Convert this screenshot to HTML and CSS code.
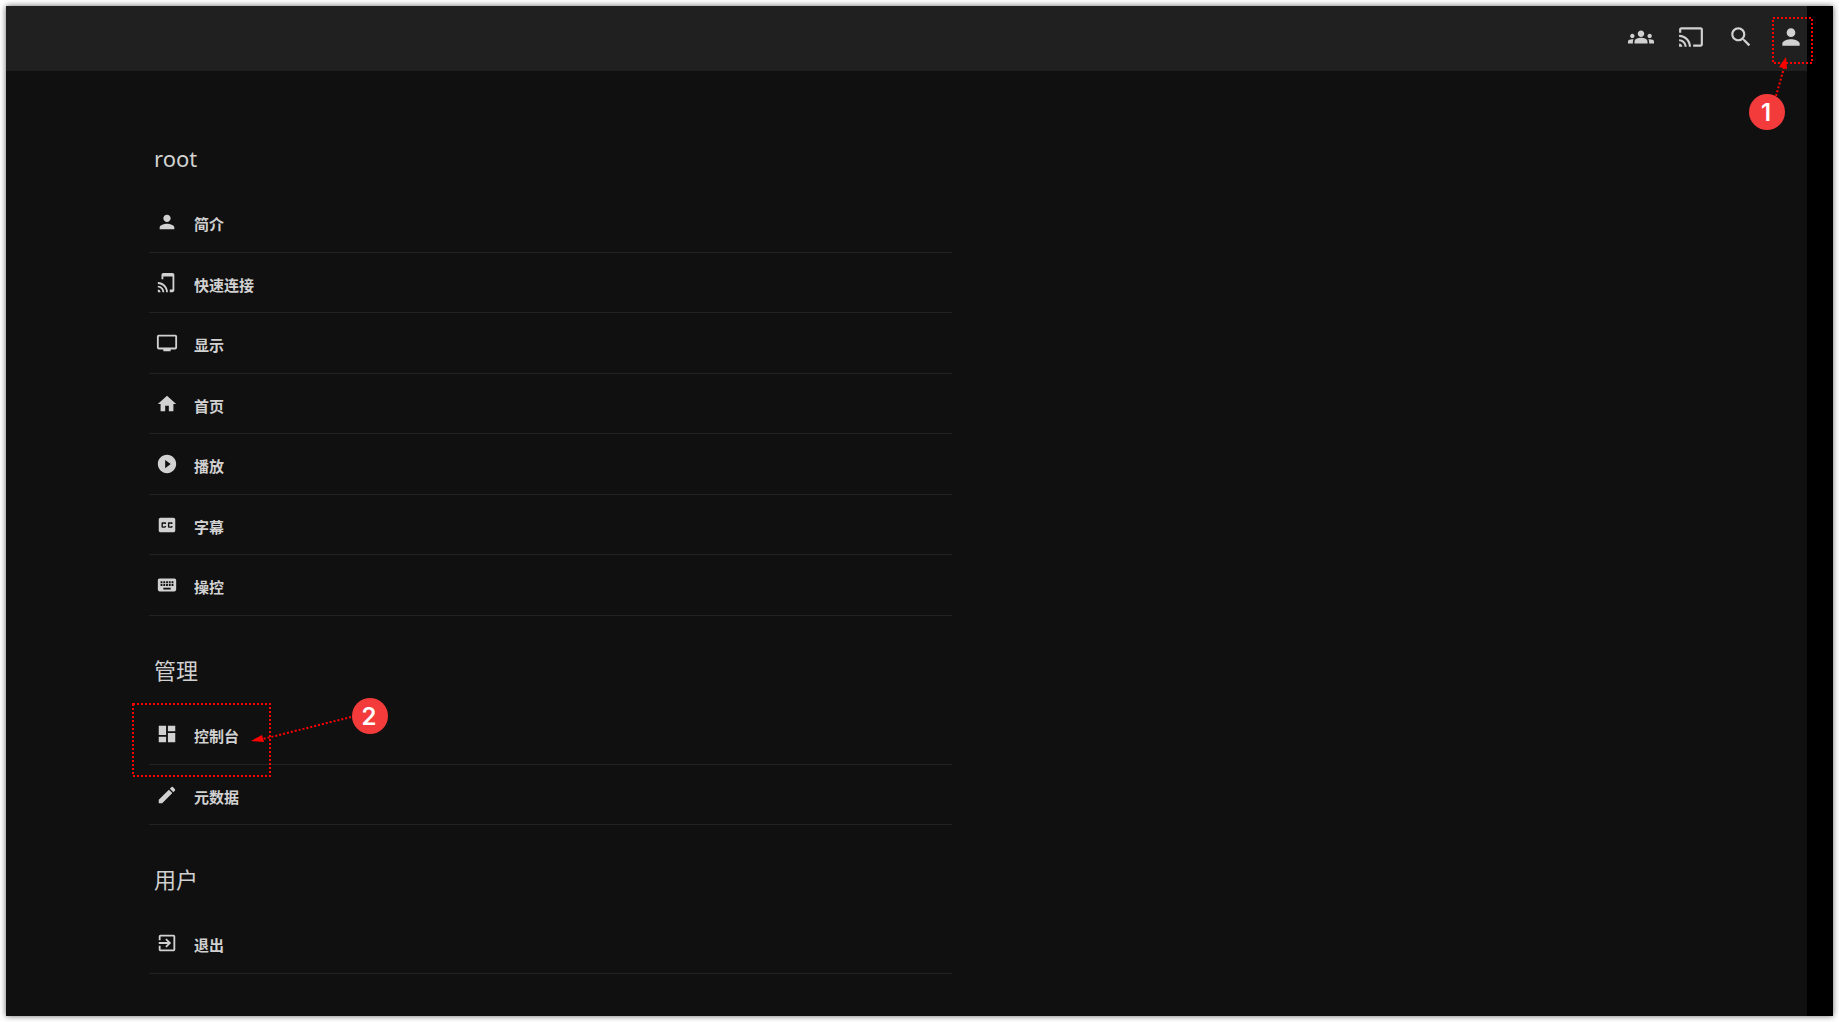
FILE: index.html
```
<!DOCTYPE html>
<html lang="zh-CN">
<head>
  <meta charset="UTF-8" />
  <meta name="viewport" content="width=device-width, initial-scale=1.0" />
  <title>root</title>
  <link rel="stylesheet" href="styles.css">
</head>
<body>

<div class="window">
  <div class="app">
    <header class="header">
      <button class="header-button" type="button" aria-label="同步播放">
        <svg viewBox="0 0 24 24"><path d="M12 12.750c1.630 0 3.070.39 4.240.9 1.080.48 1.760 1.560 1.760 2.730V18H6v-1.610c0-1.180.68-2.260 1.760-2.730 1.170-.52 2.610-.91 4.240-.91zM4 13c1.100 0 2-.9 2-2s-.9-2-2-2-2 .9-2 2 .9 2 2 2zm1.130 1.100c-.37-.06-.74-.1-1.130-.1-.99 0-1.930.21-2.780.58C.48 14.900 0 15.620 0 16.430V18h4.500v-1.610c0-.83.23-1.610.63-2.290zM20 13c1.100 0 2-.9 2-2s-.9-2-2-2-2 .9-2 2 .9 2 2 2zm4 3.430c0-.81-.48-1.530-1.220-1.850-.85-.37-1.790-.58-2.780-.58-.39 0-.76.04-1.130.1.4.68.63 1.460.63 2.290V18H24v-1.570zM12 6c1.660 0 3 1.340 3 3s-1.340 3-3 3-3-1.340-3-3 1.340-3 3-3z"/></svg>
      </button>
      <button class="header-button" type="button" aria-label="投屏">
        <svg viewBox="0 0 24 24"><path d="M21 3H3c-1.100 0-2 .9-2 2v3h2V5h18v14h-7v2h7c1.100 0 2-.9 2-2V5c0-1.100-.9-2-2-2zM1 18v3h3c0-1.660-1.340-3-3-3zm0-4v2c2.760 0 5 2.240 5 5h2c0-3.870-3.130-7-7-7zm0-4v2c4.970 0 9 4.030 9 9h2c0-6.080-4.930-11-11-11z"/></svg>
      </button>
      <button class="header-button" type="button" aria-label="搜索">
        <svg viewBox="0 0 24 24"><path d="M15.500 14h-.79l-.28-.27C15.410 12.590 16 11.110 16 9.500 16 5.910 13.090 3 9.500 3S3 5.910 3 9.500 5.910 16 9.500 16c1.610 0 3.090-.59 4.230-1.570l.27.28v.79l5 4.990L20.490 19l-4.990-5zm-6 0C7.010 14 5 11.990 5 9.500S7.010 5 9.500 5 14 7.010 14 9.500 11.990 14 9.500 14z"/></svg>
      </button>
      <div class="header-user">
        <button class="header-button" type="button" aria-label="用户">
          <svg viewBox="0 0 24 24"><path d="M12 12c2.210 0 4-1.790 4-4s-1.790-4-4-4-4 1.790-4 4 1.790 4 4 4zm0 2c-2.670 0-8 1.340-8 4v2h16v-2c0-2.660-5.330-4-8-4z"/></svg>
        </button>
        <svg class="step step-user" viewBox="0 0 66 116">
          <rect class="step-box" x="25" y="2" width="39" height="45"/>
          <path class="step-line" d="M28 80L36 52"/>
          <path class="step-head" d="M38 41L39 53L31 51Z"/>
          <circle class="step-circle" cx="19" cy="96" r="18"/>
          <text class="step-number" x="18" y="105">1</text>
        </svg>
      </div>
    </header>

    <main class="content">
      <section>
        <h2 class="title">root</h2>
        <nav class="menu">
          <a class="item" href="#">
            <svg viewBox="0 0 24 24"><path d="M12 12c2.210 0 4-1.790 4-4s-1.790-4-4-4-4 1.790-4 4 1.790 4 4 4zm0 2c-2.670 0-8 1.340-8 4v2h16v-2c0-2.660-5.330-4-8-4z"/></svg>
            <span>简介</span>
          </a>
          <a class="item" href="#">
            <svg viewBox="0 0 24 24"><path d="M18 1.010L8 1c-1.100 0-2 .9-2 2v5h2V5h10v14h-3v3h3c1.100 0 2-.9 2-2V3c0-1.100-.9-1.990-2-1.990zM2 19v3h3c0-1.660-1.340-3-3-3zm0-4v2c2.760 0 5 2.240 5 5h2c0-3.870-3.130-7-7-7zm0-4v2c4.970 0 9 4.030 9 9h2c0-6.080-4.930-11-11-11z"/></svg>
            <span>快速连接</span>
          </a>
          <a class="item" href="#">
            <svg viewBox="0 0 24 24"><path d="M21 3H3c-1.100 0-2 .9-2 2v12c0 1.100.9 2 2 2h5v2h8v-2h5c1.100 0 2-.9 2-2V5c0-1.100-.9-2-2-2zm0 14H3V5h18v12z"/></svg>
            <span>显示</span>
          </a>
          <a class="item" href="#">
            <svg viewBox="0 0 24 24"><path d="M10 20v-6h4v6h5v-8h3L12 3 2 12h3v8z"/></svg>
            <span>首页</span>
          </a>
          <a class="item" href="#">
            <svg viewBox="0 0 24 24"><path d="M12 2C6.480 2 2 6.480 2 12s4.480 10 10 10 10-4.480 10-10S17.520 2 12 2zm-2 14.500v-9l6 4.500-6 4.500z"/></svg>
            <span>播放</span>
          </a>
          <a class="item" href="#">
            <svg viewBox="0 0 24 24"><path d="M19 4H5c-1.110 0-2 .9-2 2v12c0 1.100.89 2 2 2h14c1.100 0 2-.9 2-2V6c0-1.100-.9-2-2-2zm-8 7H9.500v-.5h-2v3h2V13H11v1c0 .55-.45 1-1 1H7c-.55 0-1-.45-1-1v-4c0-.55.45-1 1-1h3c.55 0 1 .45 1 1v1zm7 0h-1.500v-.5h-2v3h2V13H18v1c0 .55-.45 1-1 1h-3c-.55 0-1-.45-1-1v-4c0-.55.45-1 1-1h3c.55 0 1 .45 1 1v1z"/></svg>
            <span>字幕</span>
          </a>
          <a class="item" href="#">
            <svg viewBox="0 0 24 24"><path d="M20 5H4c-1.100 0-1.990.9-1.990 2L2 17c0 1.100.9 2 2 2h16c1.100 0 2-.9 2-2V7c0-1.100-.9-2-2-2zm-9 3h2v2h-2V8zm0 3h2v2h-2v-2zM8 8h2v2H8V8zm0 3h2v2H8v-2zm-1 2H5v-2h2v2zm0-3H5V8h2v2zm9 7H8v-2h8v2zm0-4h-2v-2h2v2zm0-3h-2V8h2v2zm3 3h-2v-2h2v2zm0-3h-2V8h2v2z"/></svg>
            <span>操控</span>
          </a>
        </nav>
      </section>

      <section>
        <h2 class="title">管理</h2>
        <nav class="menu">
          <a class="item" href="#">
            <svg viewBox="0 0 24 24"><path d="M3 13h8V3H3v10zm0 8h8v-6H3v6zm10 0h8V11h-8v10zm0-18v6h8V3h-8z"/></svg>
            <span>控制台</span>
            <svg class="step step-console" viewBox="0 0 256 82">
              <rect class="step-box" x="1" y="8" width="137" height="72"/>
              <path class="step-line" d="M219 21L131 43"/>
              <path class="step-head" d="M119 45L130 39L132 46Z"/>
              <circle class="step-circle" cx="238" cy="20" r="18"/>
              <text class="step-number" x="237" y="29">2</text>
            </svg>
          </a>
          <a class="item" href="#">
            <svg viewBox="0 0 24 24"><path d="M3 17.250V21h3.750L17.810 9.940l-3.750-3.750L3 17.250zM20.710 7.040c.39-.39.39-1.020 0-1.410l-2.340-2.340c-.39-.39-1.020-.39-1.410 0l-1.830 1.830 3.750 3.750 1.830-1.830z"/></svg>
            <span>元数据</span>
          </a>
        </nav>
      </section>

      <section>
        <h2 class="title">用户</h2>
        <nav class="menu">
          <a class="item" href="#">
            <svg viewBox="0 0 24 24"><path d="M10.090 15.590L11.500 17l5-5-5-5-1.410 1.410L12.670 11H3v2h9.670l-2.580 2.590zM19 3H5c-1.110 0-2 .9-2 2v4h2V5h14v14H5v-4H3v4c0 1.100.89 2 2 2h14c1.100 0 2-.9 2-2V5c0-1.100-.9-2-2-2z"/></svg>
            <span>退出</span>
          </a>
        </nav>
      </section>
    </main>
  </div>
</div>

</body>
</html>
```
FILE: styles.css
```
* {
  box-sizing: border-box;
}
body {
  margin: 0;
  padding: 6px;
  min-height: 100vh;
  display: flex;
  background: #fff;
  font-family: "Noto Sans", "Noto Sans CJK SC", sans-serif;
  color: #d1d1d1;
}
.window {
  flex: 1;
  padding-right: 26px;
  display: flex;
  background: #000;
  box-shadow: 0 0 6px rgba(0,0,0,0.6);
}
.app {
  flex: 1;
  background: #101010;
}
svg {
  display: block;
  fill: currentColor;
}

/* header */
.header {
  height: 65px;
  padding: 0 3px 3px 0;
  display: flex;
  align-items: center;
  justify-content: flex-end;
  gap: 24px;
  background: #202020;
}
.header-button {
  width: 26px;
  height: 26px;
  padding: 0;
  border: none;
  background: none;
  color: inherit;
  cursor: pointer;
}
.header-user {
  position: relative;
  height: 26px;
}

/* menu */
.content {
  padding: 33px 143px 41px;
}
.content section {
  max-width: 803px;
}
.title {
  margin: 0;
  padding: 39px 5px 19px;
  font-size: 22px;
  line-height: 30px;
  font-weight: 400;
}
.item {
  position: relative;
  height: 60px;
  padding: 0 7px;
  display: flex;
  align-items: center;
  gap: 16px;
  border-bottom: 1px solid #222;
  color: inherit;
  font-size: 15px;
  line-height: 22px;
  font-weight: 700;
  text-decoration: none;
}
.item:nth-child(odd) {
  height: 61px;
}
.item > svg:first-child {
  width: 22px;
  height: 22px;
}
.item span {
  padding-top: 4px;
}

/* numbered steps */
.step {
  position: absolute;
  pointer-events: none;
}
.step-user {
  top: -8px;
  left: -30px;
  width: 66px;
  height: 116px;
}
.step-console {
  top: -8px;
  left: -17px;
  width: 256px;
  height: 82px;
}
.step-box,
.step-line {
  fill: none;
  stroke: #f00;
  stroke-width: 2;
  stroke-dasharray: 2 2;
}
.step-head {
  fill: #f00;
}
.step-circle {
  fill: #f43b3b;
}
.step-number {
  fill: #fff;
  font-family: Inter, "Liberation Sans", sans-serif;
  font-size: 24px;
  font-weight: 600;
  text-anchor: middle;
}
```
